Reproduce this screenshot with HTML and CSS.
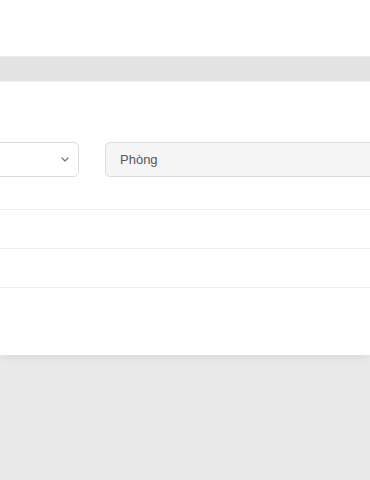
FILE: index.html
```html
<!DOCTYPE html>
<html lang="vi">
<head>
  <meta charset="UTF-8">
  <title>Danh sách phòng</title>
  <link rel="stylesheet" href="styles.css">
</head>
<body>
  <div class="header"></div>
  <div class="toolbar"></div>

  <div class="panel">
    <div class="filters">
      <div class="select">
        <svg class="chevron" width="8" height="5" viewBox="0 0 8 5">
          <path d="M1 1l3 3 3-3" fill="none" stroke="#777" stroke-width="1.3" stroke-linecap="round" stroke-linejoin="round"/>
        </svg>
      </div>
      <input class="search" type="text" placeholder="Phòng">
    </div>

    <div class="rows">
      <div class="row"></div>
      <div class="row"></div>
      <div class="row last"></div>
    </div>
  </div>

  <div class="footer"></div>
</body>
</html>
```

FILE: styles.css
```css
* {
  box-sizing: border-box;
  font-family: 'Liberation Sans', Arial, sans-serif;
}
html, body {
  margin: 0;
  padding: 0;
  overflow: hidden;
  background: #e9e9e9;
}
.header {
  height: 56px;
  background: #fff;
}
.toolbar {
  height: 26px;
  background: #e3e3e3;
  border-top: 1px solid #ececec;
  border-bottom: 1px solid #f1f1f1;
}
.panel {
  background: #fff;
  padding-top: 60px;
  height: 273px;
  position: relative;
  z-index: 1;
  overflow: hidden;
  box-shadow: 0 4px 8px -2px rgba(0, 0, 0, 0.08);
}
.filters {
  display: flex;
  gap: 26px;
  margin-left: -41px;
}
.select {
  flex: 0 0 120px;
  height: 35px;
  border: 1px solid #dcdce0;
  border-radius: 5px;
  background: #fff;
  display: flex;
  align-items: center;
  justify-content: flex-end;
  padding-right: 9px;
}
.chevron {
  display: block;
}
.search {
  flex: 0 0 320px;
  height: 35px;
  border: 1px solid #dcdce0;
  border-radius: 5px;
  background: #f5f5f6;
  padding: 0 14px;
  font-size: 13px;
  outline: none;
}
.search::placeholder {
  color: #555;
}
.rows {
  margin-top: 32px;
}
.row {
  height: 39px;
  border-top: 1px solid #ededf0;
}
.row.last {
  height: 1px;
}
.footer {
  height: 125px;
  background: #e9e9e9;
}
```
